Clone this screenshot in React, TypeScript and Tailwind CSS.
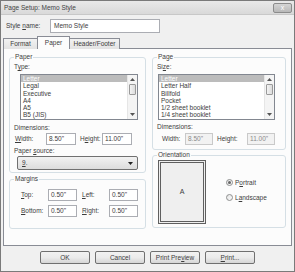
import React from "react"

// small access-key underline
function K({ children }: { children: React.ReactNode }) {
  return <span className="underline">{children}</span>
}

function TextBox({ value, w, disabled }: { value: string; w: string; disabled?: boolean }) {
  return (
    <div
      className={`${w} h-[12px] border flex items-center px-[2px] ${
        disabled ? "border-[#c9c9c9] bg-[#f2f2f2] text-[#8a8a8a]" : "border-[#abadb3] bg-white"
      }`}
    >
      {value}
    </div>
  )
}

function ScrollBar() {
  return (
    <div className="w-[10px] flex flex-col border-l border-[#e6e6e6] bg-[#f4f4f4]">
      <div className="h-[9px] flex items-center justify-center">
        <svg width="5" height="3" viewBox="0 0 5 3">
          <path d="M0 3 L2.5 0 L5 3 Z" fill="#555" />
        </svg>
      </div>
      <div className="mx-[1px] h-[11px] rounded-[1px] border border-[#9a9a9a] bg-gradient-to-r from-[#f3f3f3] to-[#dcdcdc]" />
      <div className="flex-1" />
      <div className="h-[9px] flex items-center justify-center">
        <svg width="5" height="3" viewBox="0 0 5 3">
          <path d="M0 0 L2.5 3 L5 0 Z" fill="#555" />
        </svg>
      </div>
    </div>
  )
}

function ListBox({ items, className }: { items: string[]; className: string }) {
  return (
    <div className={`${className} h-[46px] border border-[#828790] bg-white flex`}>
      <div className="flex-1 flex flex-col">
        {items.map((it, i) => (
          <div
            key={it}
            className={`h-[7.3px] leading-[7.3px] pl-[2px] ${i === 0 ? "bg-[#bcbcbc] text-white" : ""}`}
          >
            {it}
          </div>
        ))}
      </div>
      <ScrollBar />
    </div>
  )
}

function Group({ title, className, children }: { title: string; className: string; children: React.ReactNode }) {
  return (
    <fieldset className={`border border-[#d5dfe5] rounded-[3px] ${className}`}>
      <legend className="ml-[4px] px-[1px] leading-[8px]">{title}</legend>
      {children}
    </fieldset>
  )
}

function Radio({ label, checked }: { label: React.ReactNode; checked?: boolean }) {
  return (
    <div className="flex items-center gap-[2px] h-[8px]">
      <div className="w-[7px] h-[7px] rounded-full border border-[#8e8f8f] bg-gradient-to-br from-[#e6e6e6] to-[#fafafa] flex items-center justify-center">
        {checked && <div className="w-[3px] h-[3px] rounded-full bg-[#666]" />}
      </div>
      <span>{label}</span>
    </div>
  )
}

function Btn({ children }: { children: React.ReactNode }) {
  return (
    <div className="w-[50px] h-[13px] rounded-[2px] border border-[#707070] bg-gradient-to-b from-[#f2f2f2] via-[#ebebeb] to-[#d6d6d6] flex items-center justify-center">
      {children}
    </div>
  )
}

export default function App() {
  return (
    <div className="w-[295px] h-[272px] border border-[#7a7a7a] bg-[#f0f0f0] flex flex-col font-['Liberation_Sans',Arial,sans-serif] text-[6.5px] text-[#3c3c3c]">
      {/* title bar */}
      <div className="h-[14px] flex items-center justify-between pl-[3px] pr-[2px] bg-gradient-to-b from-[#e9e9e9] to-[#d9d9d9] border-b border-[#c8c8c8]">
        <span className="text-[#444]">Page Setup: Memo Style</span>
        <div className="w-[19px] h-[10px] rounded-[2px] border border-[#8c8c8c] bg-gradient-to-b from-[#d4d4d4] to-[#b8b8b8] flex items-center justify-center text-white leading-none text-[7px]">
          x
        </div>
      </div>

      {/* style name */}
      <div className="mt-[4px] flex items-center h-[14px]">
        <span className="ml-[5px] w-[44px]">
          Style <K>n</K>ame:
        </span>
        <div className="w-[110px] h-[14px] border border-[#abadb3] bg-white flex items-center pl-[3px]">Memo Style</div>
      </div>

      {/* tabs */}
      <div className="mt-[3px] ml-[2px] flex items-end h-[13px] relative z-10 -mb-[1px]">
        <div className="w-[35px] h-[11px] border border-[#898c95] border-b-0 bg-gradient-to-b from-[#f2f2f2] to-[#e3e3e3] flex items-center justify-center">
          Format
        </div>
        <div className="w-[33px] h-[13px] border border-[#898c95] border-b-0 bg-[#fcfcfc] flex items-center justify-center -mx-[1px] relative">
          Paper
        </div>
        <div className="w-[51px] h-[11px] border border-[#898c95] border-b-0 bg-gradient-to-b from-[#f2f2f2] to-[#e3e3e3] flex items-center justify-center">
          Header/Footer
        </div>
      </div>

      {/* tab panel */}
      <div className="ml-[2px] w-[289px] h-[198px] border border-[#898c95] bg-[#fcfcfc] flex gap-[6px] pl-[5px] pt-[4px]">
        {/* left column */}
        <div className="w-[137px] flex flex-col">
          <Group title="Paper" className="h-[120px]">
            <div className="ml-[4px] mt-[2px] leading-[8px]">
              T<K>y</K>pe:
            </div>
            <ListBox
              className="ml-[10px] mt-[3px] w-[118px]"
              items={["Letter", "Legal", "Executive", "A4", "A5", "B5 (JIS)"]}
            />
            <div className="ml-[4px] mt-[4px] leading-[8px]">Dimensions:</div>
            <div className="ml-[5px] mt-[1px] flex items-center">
              <span className="w-[31px]">
                <K>W</K>idth:
              </span>
              <TextBox value={'8.50"'} w="w-[30px]" />
              <span className="ml-[4px] w-[22px]">
                H<K>e</K>ight:
              </span>
              <TextBox value={'11.00"'} w="w-[30px]" />
            </div>
            <div className="ml-[4px] mt-[2px] leading-[8px]">
              Paper <K>s</K>ource:
            </div>
            <div className="ml-[7px] mt-[1px] w-[121px] h-[14px] rounded-[2px] border border-[#707070] bg-gradient-to-b from-[#f2f2f2] to-[#dcdcdc] flex items-center justify-between pl-[4px] pr-[4px]">
              <span>
                <K>9</K>.
              </span>
              <svg width="5" height="3" viewBox="0 0 5 3">
                <path d="M0 0 L2.5 3 L5 0 Z" fill="#222" />
              </svg>
            </div>
          </Group>

          <Group title="Margins" className="mt-[2px] h-[54px]">
            <div className="ml-[11px] mt-[6px] flex items-center">
              <span className="w-[27px]">
                <K>T</K>op:
              </span>
              <TextBox value={'0.50"'} w="w-[29px]" />
              <span className="ml-[5px] w-[27px]">
                <K>L</K>eft:
              </span>
              <TextBox value={'0.50"'} w="w-[29px]" />
            </div>
            <div className="ml-[11px] mt-[4px] flex items-center">
              <span className="w-[27px]">
                <K>B</K>ottom:
              </span>
              <TextBox value={'0.50"'} w="w-[29px]" />
              <span className="ml-[5px] w-[27px]">
                <K>R</K>ight:
              </span>
              <TextBox value={'0.50"'} w="w-[29px]" />
            </div>
          </Group>
        </div>

        {/* right column */}
        <div className="w-[134px] flex flex-col">
          <Group title="Page" className="h-[97px]">
            <div className="ml-[4px] mt-[2px] leading-[8px]">
              Si<K>z</K>e:
            </div>
            <ListBox
              className="ml-[5px] mt-[3px] w-[117px]"
              items={["Letter", "Letter Half", "Billfold", "Pocket", "1/2 sheet booklet", "1/4 sheet booklet"]}
            />
            <div className="ml-[4px] mt-[3px] leading-[8px]">Dimensions:</div>
            <div className="ml-[9px] mt-[2px] flex items-center">
              <span className="w-[23px]">Width:</span>
              <TextBox value={'8.50"'} w="w-[28px]" disabled />
              <span className="ml-[4px] w-[30px]">Height:</span>
              <TextBox value={'11.00"'} w="w-[28px]" disabled />
            </div>
          </Group>

          <Group title="Orientation" className="mt-[1px] h-[77px]">
            <div className="flex items-center mt-[1px]">
              <div className="ml-[5px] w-[48px] h-[64px] border-[3px] border-double border-[#5f5f5f] bg-[#efefef] flex items-center justify-center text-[7px]">
                A
              </div>
              <div className="ml-[20px] flex flex-col gap-[7px] -mt-[4px]">
                <Radio
                  checked
                  label={
                    <>
                      P<K>o</K>rtrait
                    </>
                  }
                />
                <Radio
                  label={
                    <>
                      L<K>a</K>ndscape
                    </>
                  }
                />
              </div>
            </div>
          </Group>
        </div>
      </div>

      {/* buttons */}
      <div className="mt-[5px] flex justify-center gap-[5px]">
        <Btn>OK</Btn>
        <Btn>Cancel</Btn>
        <Btn>
          <span>
            Print Pre<K>v</K>iew
          </span>
        </Btn>
        <Btn>
          <span>
            <K>P</K>rint...
          </span>
        </Btn>
      </div>
    </div>
  )
}
